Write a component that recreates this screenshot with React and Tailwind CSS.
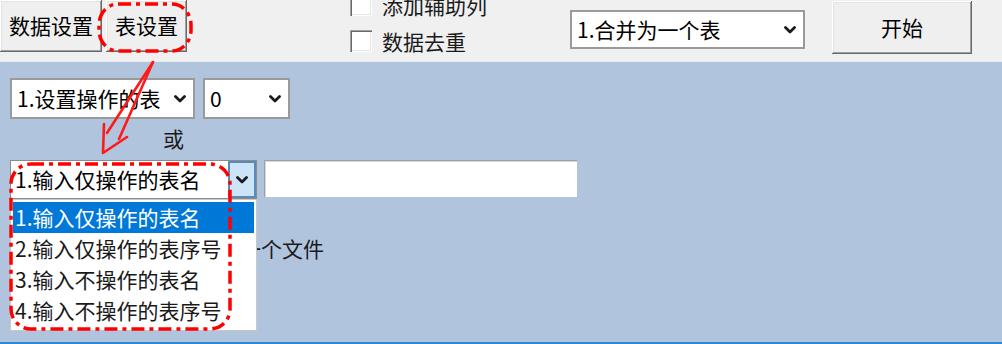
import React from "react";

const FONT = { fontFamily: '"Noto Sans CJK SC", "Noto Sans", sans-serif' };

function Chevron({ className = "" }) {
  return (
    <svg width="12" height="8" viewBox="0 0 12 8" className={className}>
      <path d="M1.5 1.5 L6 6 L10.5 1.5" fill="none" stroke="#1a1a1a" strokeWidth="2.8" strokeLinecap="round" strokeLinejoin="round" />
    </svg>
  );
}

function Button({ children, className = "" }) {
  return (
    <div
      className={
        "flex items-center justify-center bg-[#efefef] text-black shadow-[inset_-1px_-1px_0_#696969,inset_1px_1px_0_#ffffff,inset_-2px_-2px_0_#a0a0a0,inset_2px_2px_0_#e3e3e3] " +
        className
      }
    >
      {children}
    </div>
  );
}

function Combo({ text, className = "" }) {
  return (
    <div className={"flex items-center justify-between bg-white border-2 border-[#9a9a9a] pl-[5px] pr-[7px] " + className}>
      <span className="leading-none whitespace-nowrap">{text}</span>
      <Chevron />
    </div>
  );
}

function Checkbox({ label }) {
  return (
    <div className="flex items-center h-[22px] gap-[10px]">
      <div className="w-[22px] h-[22px] bg-white shadow-[inset_1px_1px_0_#a0a0a0,inset_2px_2px_0_#696969,inset_-1px_-1px_0_#ffffff,inset_-2px_-2px_0_#e3e3e3]" />
      <span className="leading-none whitespace-nowrap text-[#1a1a1a]">{label}</span>
    </div>
  );
}

export default function App() {
  const items = ["1.输入仅操作的表名", "2.输入仅操作的表序号", "3.输入不操作的表名", "4.输入不操作的表序号"];
  return (
    <div className="relative w-[1002px] h-[344px] overflow-hidden flex flex-col text-[21px] text-black" style={FONT}>
      {/* top bar */}
      <div className="h-[61px] bg-[#f0f0f0] flex items-start overflow-hidden shrink-0">
        <Button className="w-[102px] h-[52px]">数据设置</Button>
        <Button className="w-[81px] h-[52px] ml-[4px]">表设置</Button>
        <div className="flex flex-col gap-[14px] mt-[-6px] ml-[163px] w-[220px]">
          <Checkbox label="添加辅助列" />
          <Checkbox label="数据去重" />
        </div>
        <Combo text="1.合并为一个表" className="w-[235px] h-[39px] mt-[10px]" />
        <Button className="w-[140px] h-[53px] ml-[27px] mt-[1px]">开始</Button>
      </div>

      {/* blue panel */}
      <div className="flex-1 bg-[#b0c4de] border-t border-[#e4ebf4] flex flex-col px-[10px] pt-[16px]">
        <div className="flex items-center gap-[8px]">
          <Combo text="1.设置操作的表" className="w-[185px] h-[41px]" />
          <Combo text="0" className="w-[87px] h-[41px]" />
        </div>
        <div className="pl-[153px] mt-[9px] leading-[21px] text-[#1a1a1a]">或</div>
        <div className="flex items-start gap-[7px] mt-[11px]">
          <div className="relative z-10">
            <div className="flex w-[247px] h-[39px] bg-white border border-[#8c8c8c]">
              <div className="flex-1 flex items-center pl-[4px] leading-none whitespace-nowrap">1.输入仅操作的表名</div>
              <div className="w-[28px] h-full flex items-center justify-center bg-[#cce4f7] border-2 border-[#5a8ab8]">
                <Chevron />
              </div>
            </div>
            <div className="absolute left-0 top-full w-[247px] h-[132px] bg-white border border-[#c8c8c8] p-[2px]">
              {items.map((t, i) => (
                <div
                  key={t}
                  className={
                    "h-[31px] flex items-center pl-[2px] leading-none whitespace-nowrap " +
                    (i === 0 ? "bg-[#0078d7] text-white" : "text-[#1a1a1a]")
                  }
                >
                  {t}
                </div>
              ))}
            </div>
          </div>
          <div className="w-[313px] h-[37px] bg-white shadow-[inset_1px_1px_0_#a0a0a0,inset_2px_2px_0_#d8d8d8]" />
        </div>
        <div className="mt-[38px] pl-[230px] leading-[22px] text-[#1a1a1a] whitespace-nowrap">一个文件</div>
      </div>
      <div className="h-[2px] bg-[#2b87d8] shrink-0" />

      {/* annotations */}
      <svg className="absolute left-0 top-0 pointer-events-none z-20" width="1002" height="344" viewBox="0 0 1002 344">
        <g fill="none" stroke="#ff0000" strokeWidth="3.5" strokeDasharray="13 5 4 5" strokeLinecap="butt">
          <rect x="99" y="4" width="92" height="47" rx="19" ry="21" />
          <rect x="11" y="164" width="219" height="165" rx="20" ry="20" />
        </g>
        <g fill="none" stroke="#ff1a1a" strokeWidth="2.6" strokeLinecap="round" strokeLinejoin="round">
          <path d="M153 62 L107 133" />
          <path d="M153 62 L119 139" />
          <path d="M104 124 L103 153 L127 137" />
        </g>
      </svg>
    </div>
  );
}
